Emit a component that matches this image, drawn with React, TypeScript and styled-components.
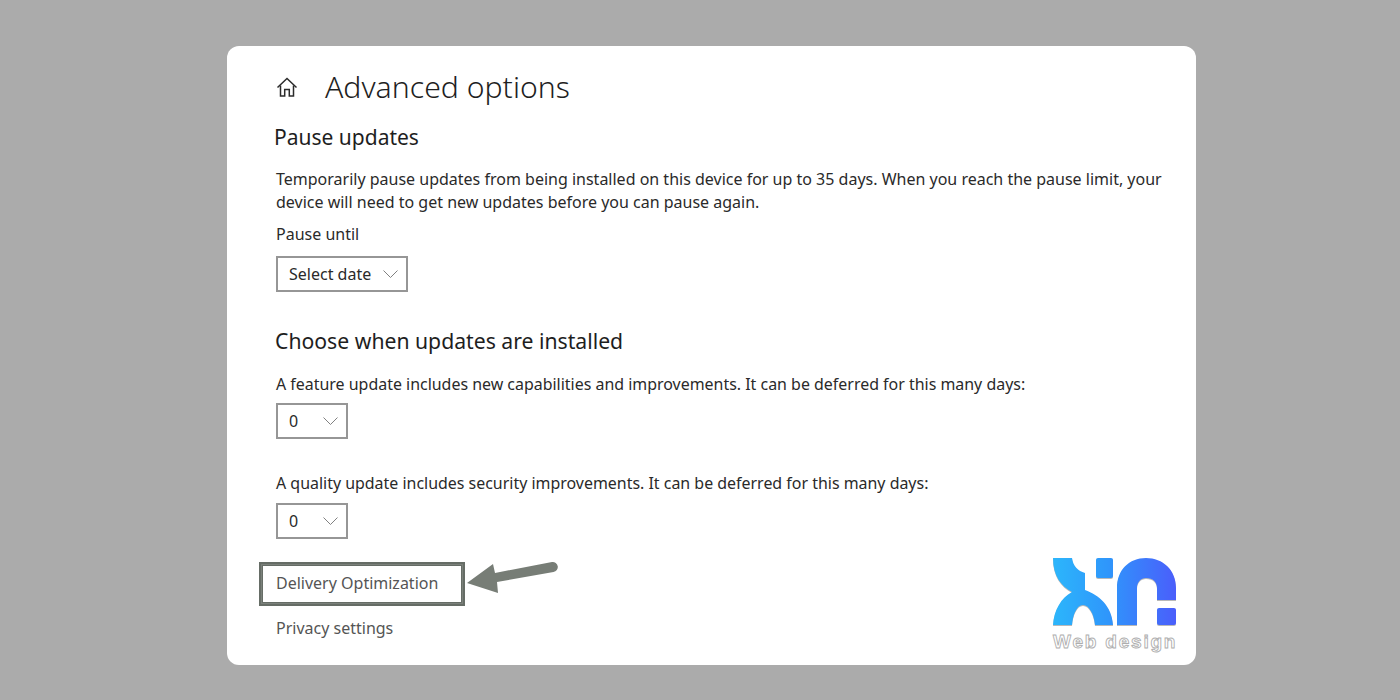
import React from "react";
import styled, { createGlobalStyle } from "styled-components";

const GlobalStyle = createGlobalStyle`
  html, body {
    margin: 0;
    height: 100%;
    background: #ababab;
    font-family: "Noto Sans", "Open Sans", sans-serif;
    color: #1c1c1c;
  }
`;

const Page = styled.div`
  width: 1400px;
  height: 700px;
  padding: 46px 204px 35px 227px;
  box-sizing: border-box;
  overflow: hidden;
`;

const Card = styled.main`
  position: relative;
  width: 969px;
  height: 619px;
  box-sizing: border-box;
  padding: 21px 30px 0 49px;
  background: #fff;
  border-radius: 12px;
`;

const TitleRow = styled.header`
  display: flex;
  align-items: center;
  gap: 27px;
  height: 40px;
`;

const Title = styled.h1`
  margin: 0;
  font-size: 30.2px;
  font-weight: 300;
  line-height: 40px;
  color: #1f1f1f;
`;

const SectionTitle = styled.h2<{ $top: number; $left: number; $size: number }>`
  margin: ${(p) => p.$top}px 0 0 ${(p) => p.$left}px;
  font-size: ${(p) => p.$size}px;
  font-weight: 400;
  line-height: 28px;
  color: #1e1e1e;
`;

const Text = styled.p<{ $top: number; $size?: number }>`
  margin: ${(p) => p.$top}px 0 0;
  font-size: ${(p) => p.$size ?? 16}px;
  line-height: 23px;
  color: #2a2a2a;
`;

const Select = styled.div<{ $width: number; $top: number }>`
  display: flex;
  align-items: center;
  justify-content: space-between;
  box-sizing: border-box;
  width: ${(p) => p.$width}px;
  height: 36px;
  margin-top: ${(p) => p.$top}px;
  padding: 0 8px 0 11px;
  border: 2px solid #969696;
  font-size: 16px;
  color: #2a2a2a;
`;

const LinkBox = styled.div`
  box-sizing: border-box;
  width: 206px;
  height: 44px;
  margin: 23px 0 0 -17px;
  padding: 2px 0 0 13px;
  border: 4px solid #666d66;
  outline: 1px solid #7b817b;
  outline-offset: -3px;
  font-size: 16px;
  line-height: 30px;
  color: #555;
`;

const PlainLink = styled.div`
  margin-top: 11px;
  font-size: 16px;
  line-height: 23px;
  color: #555;
`;

const Arrow = styled.svg`
  position: absolute;
  left: 238px;
  top: 514px;
`;

const Logo = styled.div`
  position: absolute;
  left: 822px;
  top: 510px;
  width: 132px;
  height: 100px;
`;

const LogoMark = styled.svg`
  display: block;
  filter: drop-shadow(0 1px 0 #b9b9b9);
`;

const LogoText = styled.div`
  position: absolute;
  left: 4px;
  top: 75px;
  font-family: "Liberation Sans", sans-serif;
  font-size: 19px;
  font-weight: 700;
  line-height: 22px;
  letter-spacing: 1.8px;
  white-space: nowrap;
  color: #fff;
  -webkit-text-stroke: 0.9px #aeaeae;
`;

const Chevron = () => (
  <svg width="15" height="8" viewBox="0 0 15 8" fill="none">
    <path d="M.5.5l7 7 7-7" stroke="#808080" strokeWidth="1" />
  </svg>
);

const HomeIcon = () => (
  <svg width="22" height="22" viewBox="0 0 22 22" fill="none" stroke="#2b2b2b" strokeWidth="1.5">
    <path d="M1.5 11.5L11 2.5l9.5 9" />
    <path d="M4.5 9.5V20h4.2v-6.5h4.6V20h4.2V9.5" />
  </svg>
);

export default function App() {
  return (
    <>
      <GlobalStyle />
      <Page>
        <Card>
          <TitleRow>
            <HomeIcon />
            <Title>Advanced options</Title>
          </TitleRow>
          <SectionTitle $top={16} $left={-2} $size={21}>Pause updates</SectionTitle>
          <Text $top={17}>
            Temporarily pause updates from being installed on this device for up to 35 days. When you reach the pause limit, your
            <br />
            device will need to get new updates before you can pause again.
          </Text>
          <Text $top={9}>Pause until</Text>
          <Select $width={132} $top={10}>
            Select date
            <Chevron />
          </Select>
          <SectionTitle $top={35} $left={-1} $size={21.2}>Choose when updates are installed</SectionTitle>
          <Text $top={18} $size={15.95}>A feature update includes new capabilities and improvements. It can be deferred for this many days:</Text>
          <Select $width={72} $top={7}>
            0
            <Chevron />
          </Select>
          <Text $top={33} $size={15.95}>A quality update includes security improvements. It can be deferred for this many days:</Text>
          <Select $width={72} $top={8}>
            0
            <Chevron />
          </Select>
          <LinkBox>Delivery Optimization</LinkBox>
          <PlainLink>Privacy settings</PlainLink>
          <Arrow width="96" height="40" viewBox="0 0 96 40">
            <path d="M2 23L28 4l2 9 57-11a5 5 0 0 1 1.500 10L32 22l1 11z" fill="#777d76" />
          </Arrow>
          <Logo>
            <LogoMark width="132" height="74" viewBox="0 0 132 74">
              <defs>
                <linearGradient id="logoGrad" gradientUnits="userSpaceOnUse" x1="4" x2="127" y1="0" y2="0">
                  <stop offset="0" stopColor="#2cb6fb" />
                  <stop offset="0.45" stopColor="#2f96fb" />
                  <stop offset="1" stopColor="#4a5efb" />
                </linearGradient>
              </defs>
              <path
                fill="url(#logoGrad)"
                d="M4 2H23C24 10 29 15 36 17V34C50 39 63 50 64 69H46C45 58 40 49 34 49C28 49 24 58 23 69H4C5 54 12 42 23 36C12 30 4 20 4 2Z"
              />
              <rect fill="url(#logoGrad)" x="47" y="2" width="17" height="20" rx="2" />
              <path
                fill="url(#logoGrad)"
                d="M68 69V32C68 14 80 2 97 2C114 2 127 14 127 32V44H108V32C108 26 104 22 97 22C92 22 88 26 88 32V69Z"
              />
              <rect fill="url(#logoGrad)" x="108" y="52" width="19" height="17" rx="2" />
            </LogoMark>
            <LogoText>Web design</LogoText>
          </Logo>
        </Card>
      </Page>
    </>
  );
}
